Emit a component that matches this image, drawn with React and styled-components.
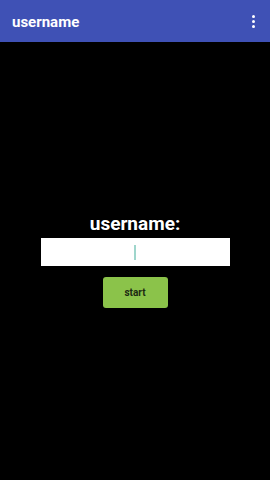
import styled, { createGlobalStyle } from "styled-components";

const Global = createGlobalStyle`
  html, body {
    margin: 0;
    padding: 0;
    background: #000;
    font-family: Roboto, "Liberation Sans", sans-serif;
  }
`;

const Page = styled.div`
  width: 270px;
  height: 480px;
  display: flex;
  flex-direction: column;
  background: #000;
`;

const Toolbar = styled.div`
  height: 42px;
  background: #3f51b5;
  display: flex;
  align-items: center;
  justify-content: space-between;
  padding: 0 12px 0 12px;
  box-sizing: border-box;
`;

const Title = styled.div`
  color: #fff;
  font-size: 15px;
  font-weight: 700;
  padding-top: 1px;
`;

const Menu = styled.div`
  display: flex;
  flex-direction: column;
  gap: 2px;
  padding-right: 3px;
`;

const Dot = styled.span`
  width: 3px;
  height: 3px;
  border-radius: 50%;
  background: #fff;
`;

const Main = styled.div`
  flex: 1;
  display: flex;
  flex-direction: column;
  align-items: center;
  padding-top: 171px;
`;

const Label = styled.div`
  color: #fff;
  font-size: 19px;
  font-weight: 700;
  line-height: 22px;
`;

const Field = styled.div`
  margin-top: 3px;
  width: 189px;
  height: 28px;
  background: #fff;
  display: flex;
  align-items: center;
  justify-content: center;
`;

const Caret = styled.span`
  width: 2px;
  height: 15px;
  margin-right: 1px;
  background: #9fd6cc;
`;

const Button = styled.div`
  margin-top: 11px;
  width: 65px;
  height: 31px;
  background: #8bc34a;
  border-radius: 3px;
  display: flex;
  align-items: center;
  justify-content: center;
  color: #1d2a12;
  font-size: 10px;
  font-weight: 700;
`;

export default function App() {
  return (
    <Page>
      <Global />
      <Toolbar>
        <Title>username</Title>
        <Menu>
          <Dot />
          <Dot />
          <Dot />
        </Menu>
      </Toolbar>
      <Main>
        <Label>username:</Label>
        <Field>
          <Caret />
        </Field>
        <Button>start</Button>
      </Main>
    </Page>
  );
}
